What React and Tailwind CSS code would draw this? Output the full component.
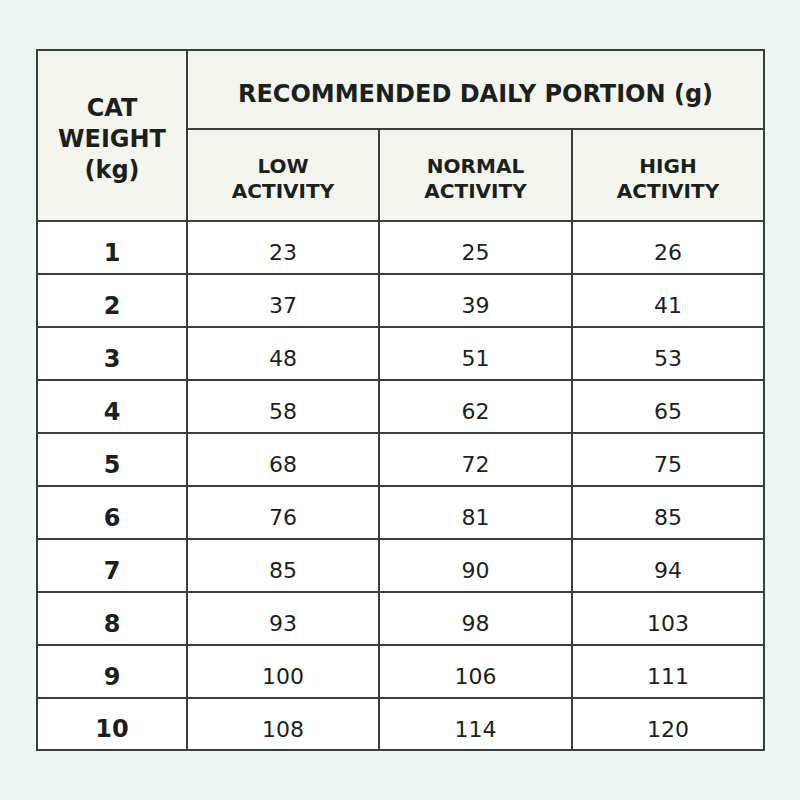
const rows = [
  [1, 23, 25, 26],
  [2, 37, 39, 41],
  [3, 48, 51, 53],
  [4, 58, 62, 65],
  [5, 68, 72, 75],
  [6, 76, 81, 85],
  [7, 85, 90, 94],
  [8, 93, 98, 103],
  [9, 100, 106, 111],
  [10, 108, 114, 120],
];

export default function App() {
  return (
    <div
      className="w-[800px] h-[800px] bg-[#eef6f4] pt-[49px] pl-[36px]"
      style={{ fontFamily: '"DejaVu Sans", sans-serif' }}
    >
      <table className="table-fixed border-collapse w-[727px] border-2 border-[#37403d] text-[#1b1f1d]">
        <colgroup>
          <col className="w-[150px]" />
          <col className="w-[192px]" />
          <col className="w-[193px]" />
          <col className="w-[192px]" />
        </colgroup>
        <thead className="bg-[#f4f5ee]">
          <tr className="h-[79px]">
            <th
              rowSpan={2}
              className="border-2 border-[#37403d] text-[24px] font-bold leading-[31px] pt-2"
            >
              CAT
              <br />
              WEIGHT
              <br />
              (kg)
            </th>
            <th
              colSpan={3}
              className="border-2 border-[#37403d] text-[24px] font-bold pt-2"
            >
              RECOMMENDED DAILY PORTION (g)
            </th>
          </tr>
          <tr className="h-[92px]">
            {["LOW", "NORMAL", "HIGH"].map((l) => (
              <th
                key={l}
                className="border-2 border-[#37403d] text-[20px] font-bold leading-[25px] pt-2"
              >
                {l}
                <br />
                ACTIVITY
              </th>
            ))}
          </tr>
        </thead>
        <tbody className="bg-white">
          {rows.map((r, idx) => (
            <tr key={r[0]} className={idx === rows.length - 1 ? "h-[52px]" : "h-[53px]"}>
              <td className="border-2 border-[#37403d] text-center text-[24px] font-bold pt-[10px]">
                {r[0]}
              </td>
              {r.slice(1).map((v, i) => (
                <td
                  key={i}
                  className="border-2 border-[#37403d] text-center text-[22px] pt-[10px]"
                >
                  {v}
                </td>
              ))}
            </tr>
          ))}
        </tbody>
      </table>
    </div>
  );
}
